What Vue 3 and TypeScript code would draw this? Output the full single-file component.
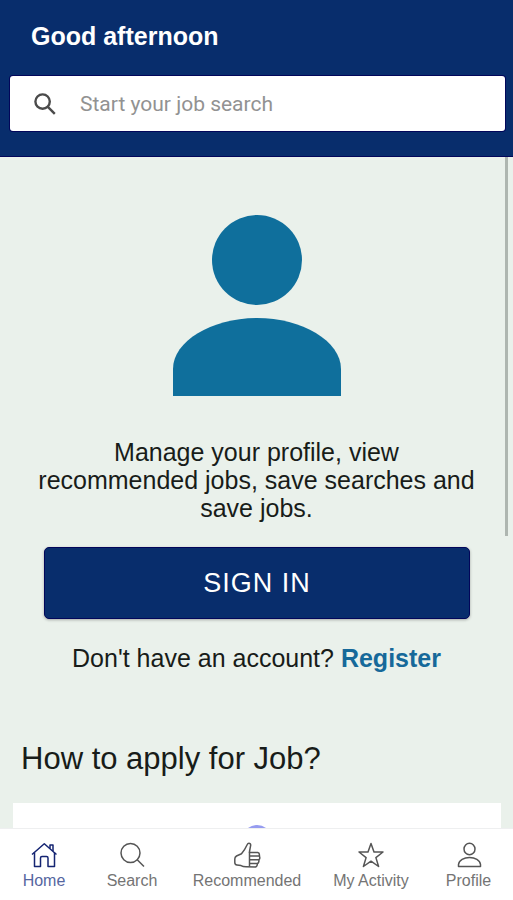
<script setup lang="ts">
import { ref } from 'vue'

type IconName = 'home' | 'search' | 'thumb' | 'star' | 'person'

interface NavItem {
  label: string
  icon: IconName
}

const query = ref('')

const navItems: NavItem[] = [
  { label: 'Home', icon: 'home' },
  { label: 'Search', icon: 'search' },
  { label: 'Recommended', icon: 'thumb' },
  { label: 'My Activity', icon: 'star' },
  { label: 'Profile', icon: 'person' },
]

const active = ref('Home')

const iconPaths: Record<IconName, string[]> = {
  home: [
    'M2 13.5 L14.3 2.8 L26.5 13.5',
    'M4.5 11.5 V25.5 H10.5 V17 Q10.5 15.5 12 15.5 H16.5 Q18 15.5 18 17 V25.5 H24.5 V11.5',
    'M20 7.5 V4 H23 V10',
  ],
  search: ['M3 12 a9.5 9.5 0 1 0 19 0 a9.5 9.5 0 1 0 -19 0', 'M19 18.5 L26 25.5'],
  thumb: [
    'M16.5 10.5 L17.7 4.2 Q17.7 2.3 15.9 2.3 Q14.8 2.3 14 4 Q12 8.5 8.5 12.8 L3.5 15 Q1.8 16 1.8 18 V21.5 Q1.8 23.8 4 24 L8 24.6 Q10 25.7 13 25.7 L22.5 26 Q24.3 25.5 24.5 22.5 Q26 22 26 18.8 Q27.4 17.5 26.4 15 Q26.8 12 24.8 11.5 L16.5 11.5 Z',
    'M16.5 11 V25.5',
    'M16.5 15 H26.4 M16.5 18.8 H26 M16.5 22.5 H24.5',
  ],
  star: [
    'M14 2.5 L17 11 H26 L18.9 16.6 L21.6 25.5 L14 20.2 L6.4 25.5 L9.1 16.6 L2 11 H11 Z',
  ],
  person: [
    'M9 8 a5.5 5.8 0 1 0 11 0 a5.5 5.8 0 1 0 -11 0',
    'M3.5 25.5 V23.5 C4 19 9 16.500 14.500 16.500 C20 16.500 25 19 25.500 23.500 V25.500 Z',
  ],
}
</script>

<template>
  <div class="page">
    <header class="header">
      <h1 class="greeting">Good afternoon</h1>
      <label class="search">
        <svg class="search-icon" viewBox="0 0 22 22" aria-hidden="true">
          <circle cx="8.6" cy="8.6" r="7.2" />
          <path d="M13.6 13.600 L20.800 20.800" />
        </svg>
        <input
          v-model="query"
          class="search-input"
          type="text"
          placeholder="Start your job search"
          aria-label="Start your job search"
        />
      </label>
    </header>

    <main class="content">
      <section class="account">
        <svg class="avatar" viewBox="0 0 168 181" aria-hidden="true">
          <circle cx="84" cy="45" r="45" />
          <path d="M0 181 V154 C0 126 39 103 84 103 C129 103 168 126 168 154 V181 Z" />
        </svg>
        <p class="intro">Manage your profile, view recommended jobs, save searches and save jobs.</p>
        <button class="sign-in" type="button">SIGN IN</button>
        <p class="register">Don't have an account? <a href="#register">Register</a></p>
      </section>
      <section class="guide">
        <h2 class="guide-title">How to apply for Job?</h2>
        <div class="guide-card"><span class="guide-dot"></span></div>
      </section>
      <div class="scrollbar"></div>
    </main>

    <nav class="tabs">
      <a
        v-for="item in navItems"
        :key="item.label"
        href="#"
        class="tab"
        :class="{ active: item.label === active }"
        @click.prevent="active = item.label"
      >
        <svg class="tab-icon" viewBox="0 0 28 28" aria-hidden="true">
          <path v-for="d in iconPaths[item.icon]" :key="d" :d="d" />
        </svg>
        <span>{{ item.label }}</span>
      </a>
    </nav>
  </div>
</template>

<style>
body {
  background: #eaf1eb;
}
</style>

<style scoped>
.page {
  display: flex;
  flex-direction: column;
  height: 100vh;
  overflow: hidden;
  background: #eaf1eb;
  color: #181c19;
  font-family: "Liberation Sans", Arial, sans-serif;
}

.header {
  flex: none;
  padding: 20px 8px 25px 10px;
  background: #082d6c;
  border-bottom: 1px solid #02065a;
}

.greeting {
  margin: 0 0 24px 21px;
  color: #fff;
  font-size: 25px;
  line-height: 32px;
}

.search {
  display: flex;
  align-items: center;
  gap: 24px;
  height: 55px;
  padding: 0 24px;
  border-radius: 3px;
  background: #fff;
  box-shadow: 0 0 0 1px #02065a;
}

.search-icon {
  flex: none;
  width: 22px;
  height: 22px;
  fill: none;
  stroke: #4b4b4b;
  stroke-width: 2.4;
}

.search-input {
  flex: 1;
  min-width: 0;
  padding: 0;
  border: 0;
  outline: 0;
  background: transparent;
  color: #333;
  font-family: Roboto, sans-serif;
  font-size: 21px;
  line-height: 28px;
}

.search-input::placeholder {
  color: #929292;
  opacity: 1;
}

.content {
  position: relative;
  flex: 1;
  min-height: 0;
  overflow: hidden;
}

.account {
  display: flex;
  flex-direction: column;
  align-items: center;
  padding: 58px 32px 0;
  text-align: center;
}

.avatar {
  width: 168px;
  height: 181px;
  fill: #0f6f9c;
}

.intro {
  margin: 42px 0 25px;
  font-size: 25px;
  line-height: 28px;
}

.sign-in {
  align-self: stretch;
  height: 72px;
  margin: 0 11px 0 12px;
  border: 1px solid #02065a;
  border-radius: 5px;
  background: #082d6c;
  box-shadow: 0 1px 3px rgba(0, 0, 0, 0.3);
  color: #fff;
  font-family: inherit;
  font-size: 27px;
  letter-spacing: 1px;
}

.register {
  margin: 24px 0 0;
  font-size: 25px;
  line-height: 30px;
}

.register a {
  color: #16699a;
  font-weight: bold;
  text-decoration: none;
}

.guide {
  padding: 68px 12px 0 13px;
}

.guide-title {
  margin: 0 0 26px 8px;
  font-size: 31px;
  font-weight: normal;
  line-height: 36px;
}

.guide-card {
  display: flex;
  justify-content: center;
  height: 200px;
  padding-top: 22px;
  background: #fff;
}

.guide-dot {
  width: 30px;
  height: 30px;
  border-radius: 50%;
  background: #969cf0;
}

.scrollbar {
  position: absolute;
  top: 0;
  right: 5px;
  width: 3px;
  height: 379px;
  background: #aeb6b0;
}

.tabs {
  flex: none;
  display: grid;
  grid-template-columns: 88fr 88fr 142fr 106fr 89fr;
  height: 72px;
  box-sizing: border-box;
  padding-top: 12px;
  border-top: 1px solid #eeeff0;
  background: #fff;
}

.tab {
  display: flex;
  flex-direction: column;
  align-items: center;
  color: #747474;
  font-size: 16px;
  line-height: 24px;
  text-decoration: none;
  white-space: nowrap;
}

.tab-icon {
  width: 28px;
  height: 28px;
  fill: none;
  stroke: #555;
  stroke-width: 1.5;
  stroke-linejoin: round;
}

.tab.active {
  color: #5566a0;
}

.tab.active .tab-icon {
  stroke: #142472;
}
</style>
